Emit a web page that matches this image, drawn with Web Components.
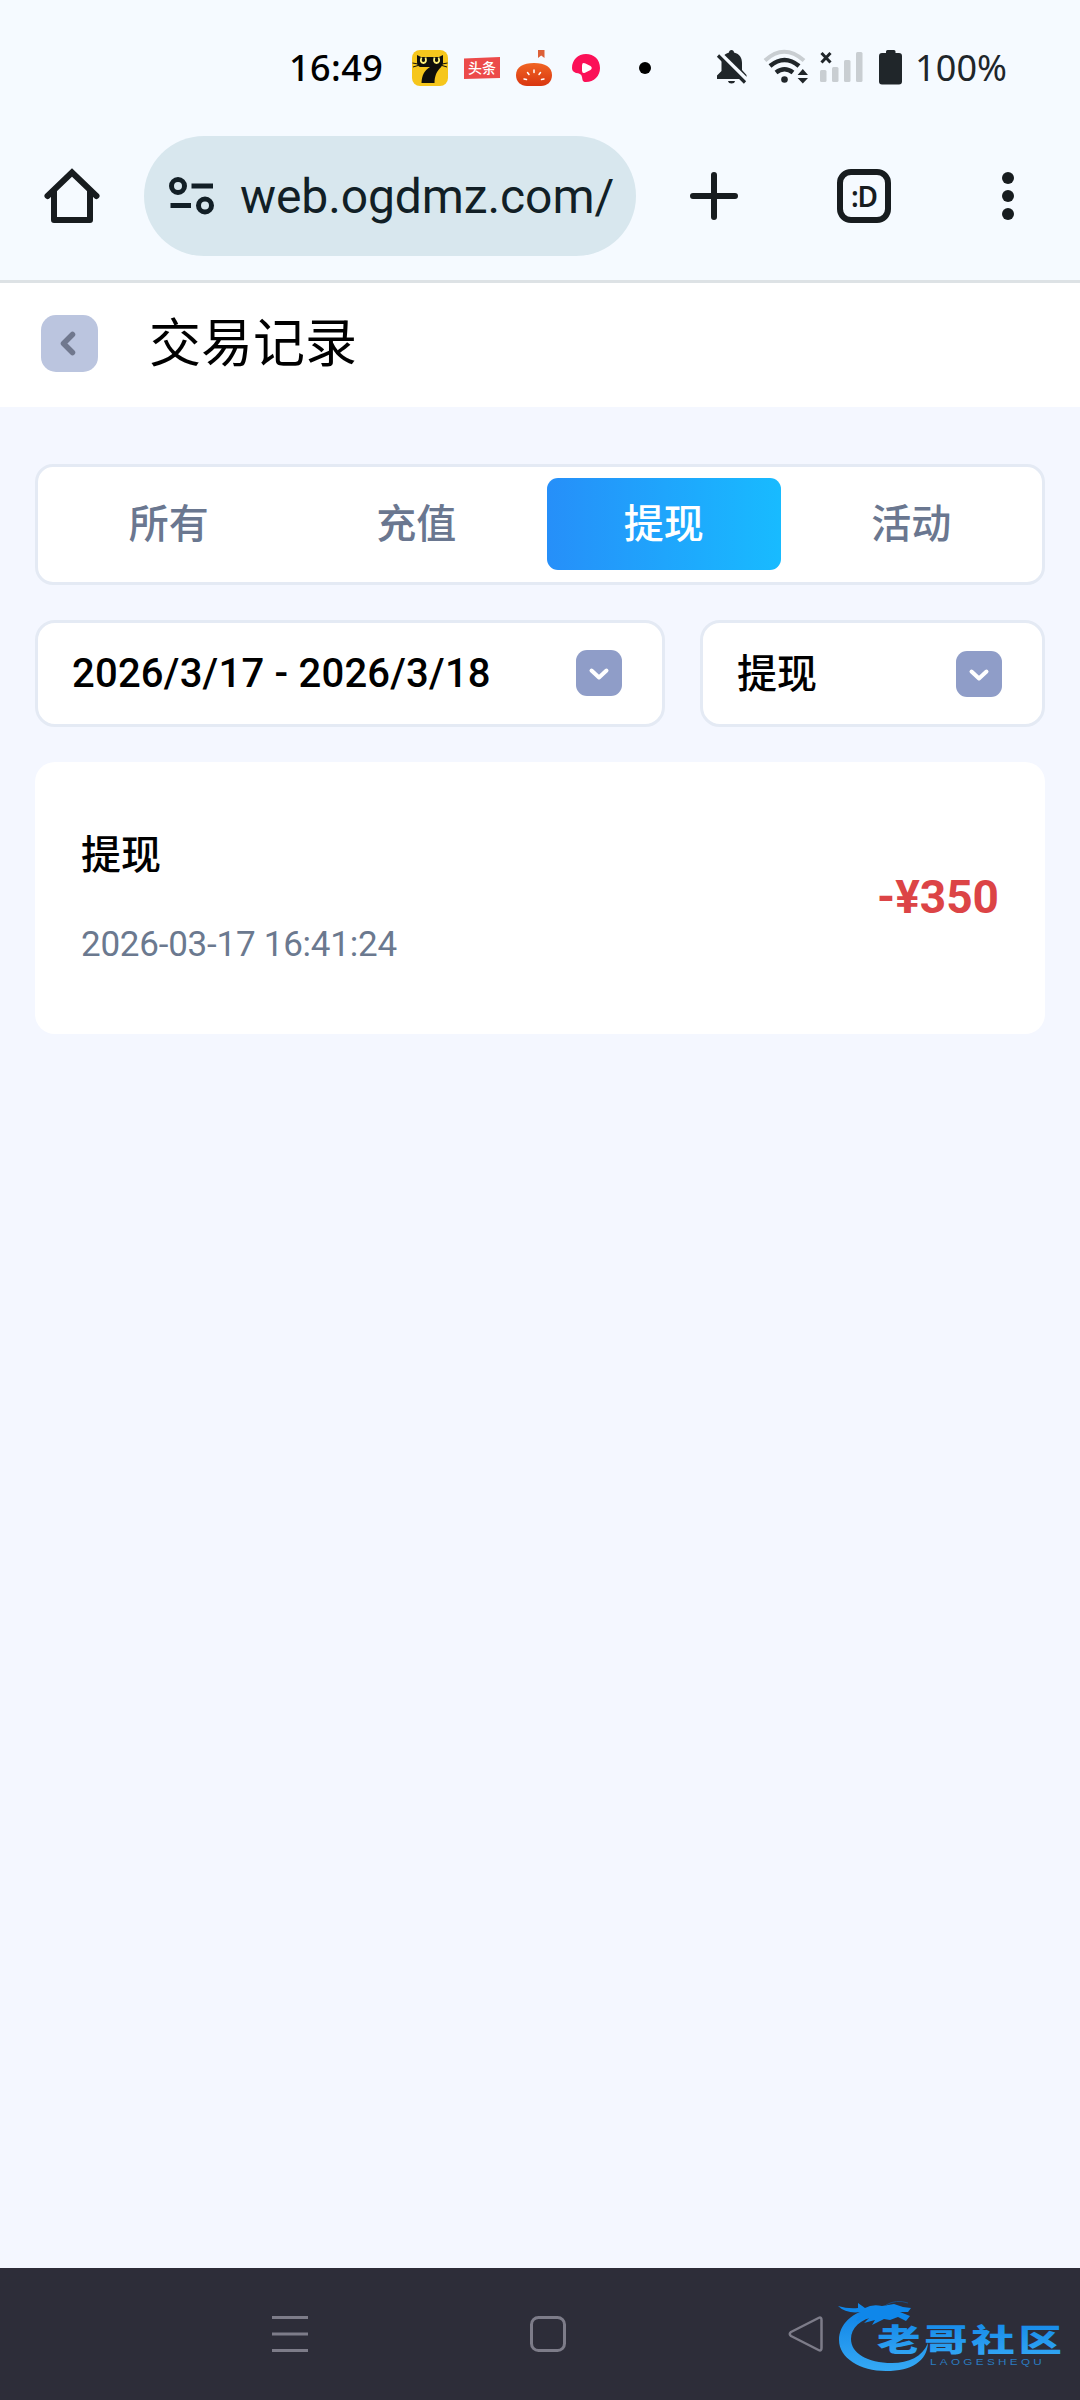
<!DOCTYPE html>
<html lang="zh-CN">
<head>
<meta charset="utf-8">
<title>交易记录</title>
<style>
  html, body {
    margin: 0;
    padding: 0;
  }
  body {
    width: 1080px;
    height: 2400px;
    overflow: hidden;
    background: #f4f7ff;
    font-family: Roboto, "Noto Sans CJK SC", sans-serif;
  }
</style>
</head>
<body>
<app-screen>
  <status-bar slot="top" time="16:49" battery="100%"></status-bar>
  <browser-bar slot="top" tabs=":D">web.ogdmz.com/</browser-bar>
  <page-header slot="top">交易记录</page-header>

  <record-tabs>
    <record-tab>所有</record-tab>
    <record-tab>充值</record-tab>
    <record-tab active>提现</record-tab>
    <record-tab>活动</record-tab>
  </record-tabs>
  <filter-row>
    <filter-select range>2026/3/17 - 2026/3/18</filter-select>
    <filter-select>提现</filter-select>
  </filter-row>
  <record-card>
    <span slot="title">提现</span>
    <span slot="date">2026-03-17 16:41:24</span>
    <span slot="amount">-¥350</span>
  </record-card>

  <nav-bar slot="bottom"></nav-bar>
</app-screen>

<script>
class BaseElement extends HTMLElement {
  constructor() {
    super();
    this.attachShadow({ mode: 'open' });
  }

  connectedCallback() {
    this.shadowRoot.innerHTML = this.render();
  }
}

class AppScreen extends BaseElement {
  render() {
    return `
      <style>
        :host {
          display: flex;
          flex-direction: column;
          width: 1080px;
          height: 2400px;
          background: #f4f7ff;
        }
        main {
          flex: 1;
          display: flex;
          flex-direction: column;
          padding: 57px 35px 0;
        }
      </style>
      <slot name="top"></slot>
      <main><slot></slot></main>
      <slot name="bottom"></slot>
    `;
  }
}

class StatusBar extends BaseElement {
  render() {
    return `
      <style>
        :host {
          display: flex;
          align-items: center;
          box-sizing: border-box;
          height: 120px;
          padding: 16px 0 0 289px;
          background: #f5faff;
          font-family: "Noto Sans", sans-serif;
          font-size: 36px;
          line-height: 52px;
          color: #000;
        }
        svg { display: block; flex: none; overflow: visible; }
        .time, .level { white-space: nowrap; }
        .time { width: 123px; font-weight: 500; letter-spacing: 0.4px; }
        .apps, .sys { display: flex; align-items: center; }
        .apps { gap: 16px; }
        .sys, .level { color: #20262a; }
        .sys { margin-left: 53px; }
        .level { margin-left: 13px; letter-spacing: 0.1px; }
      </style>
      <span class="time">${this.getAttribute('time')}</span>
      <div class="apps">
        <svg width="36" height="36" viewBox="0 0 36 36">
          <rect width="36" height="36" rx="8" fill="#f6c61c"/>
          <path d="M5 5 L9 7 H27 L31 5 V13 C30 19 23 19 22.500 33 H9.500 C10 25 12 21 18 17 H8 Q5 16 5 12 Z" fill="#100f0b"/>
          <path d="M0.500 13 L6 14 M1 17 L6 15.500 M35.500 13 L30 14 M35 17 L30 15.500" stroke="#100f0b" stroke-width="1"/>
          <path d="M9.500 7.500 Q7.500 12.500 11.500 13 Q15 12.500 13.500 7.500 M22.500 7.500 Q21 12.500 24.500 13 Q28.500 12.500 26.500 7.500" fill="none" stroke="#fff27a" stroke-width="1.800"/>
        </svg>
        <svg width="36" height="36" viewBox="0 0 36 36">
          <path d="M0 8.500 L36 7 V28 L0 29 Z" fill="#ec4a4a"/>
          <text x="18" y="23" text-anchor="middle" font-family="Noto Sans CJK SC, sans-serif" font-size="14" font-weight="500" fill="#fff">头条</text>
        </svg>
        <svg width="36" height="36" viewBox="0 0 36 36">
          <defs><linearGradient id="tomato" x1="0" y1="0" x2="0" y2="1"><stop offset="0" stop-color="#f06524"/><stop offset="1" stop-color="#d93610"/></linearGradient></defs>
          <path d="M22 0 H28.500 V8 L25.200 5.500 L22 8 Z" fill="#dc6038"/>
          <path d="M18 13 C29 13 36 17 36 25 C36 32 31 36 25 36 H11 C5 36 0 32 0 25 C0 17 7 13 18 13 Z" fill="url(#tomato)"/>
          <path d="M18 20 V22.500 M11.500 22.500 L13 24.500 M24.500 22.500 L23 24.500 M8 29 L10.500 29.500 M28 29 L25.500 29.500" stroke="#fff" stroke-width="1.500" stroke-linecap="round"/>
        </svg>
        <svg width="36" height="36" viewBox="0 0 36 36">
          <path d="M18 4 C26 4 32 9.500 32 18 C32 26 26 32 18 32 C14.500 32 14.500 30 14 27 C13.500 24 11 23 8 23 C5 22 4 20 4 18 C4 10 10 4 18 4 Z" fill="#fb1057"/>
          <path d="M14 15.500 Q14 12 17.500 13.500 L22.500 16 Q25 18 22.500 20 L17 22.800 Q14 24 14 20.500 Z" fill="#fff"/>
        </svg>
        <svg width="36" height="36" viewBox="0 0 36 36" style="margin-left: 7px"><circle cx="18" cy="18" r="6" fill="#000"/></svg>
      </div>
      <div class="sys">
        <svg width="32" height="36" viewBox="0 0 32 36">
          <path d="M15.500 0 C17 0 18 1 18 2.500 C24 4 26 8 26 13 V20 L30.500 25 V29 H1 V25.500 L5.500 21 V13 C5.500 7 8 4 13 2.500 C13 1 14 0 15.500 0 Z" fill="currentColor"/>
          <path d="M12 31 H19 Q18.500 33.500 15.500 33.500 Q12.500 33.500 12 31 Z" fill="currentColor"/>
          <path d="M4 3.500 L32 31" stroke="#f5faff" stroke-width="4"/>
          <path d="M2 5.500 L29 32.500" stroke="currentColor" stroke-width="3.200"/>
        </svg>
        <svg width="44" height="36" viewBox="0 0 44 36" style="margin-left: 16px" fill="none">
          <path d="M1 10.500 Q20 -7 40 10.500" stroke="#c9ced2" stroke-width="4"/>
          <path d="M6 16 Q20.500 4 35 16" stroke="currentColor" stroke-width="4.500"/>
          <path d="M12 22.500 Q20.500 16 29 22.500" stroke="currentColor" stroke-width="4.500"/>
          <circle cx="20.500" cy="29.500" r="3.300" fill="currentColor"/>
          <path d="M38.800 19 L44 25 H33.600 Z M38.800 33.500 L44 28 H33.600 Z" fill="currentColor"/>
        </svg>
        <svg width="43" height="36" viewBox="0 0 43 36" style="margin-left: 12px">
          <g fill="#c9ced2">
            <rect x="0" y="20" width="6.500" height="12" rx="1.500"/>
            <rect x="12" y="17" width="6.500" height="15" rx="1.500"/>
            <rect x="24" y="10" width="6.500" height="22" rx="1.500"/>
            <rect x="36" y="2" width="6.500" height="30" rx="1.500"/>
          </g>
          <path d="M1.500 3 L10.500 12.500 M10.500 3 L1.500 12.500" stroke="currentColor" stroke-width="3"/>
        </svg>
        <svg width="23" height="36" viewBox="0 0 23 36" style="margin-left: 16px">
          <path d="M7 3 V1.500 Q7 0 8.500 0 H15 Q16.500 0 16.500 1.500 V3 H20 Q23 3 23 6 V31.500 Q23 34.500 20 34.500 H3 Q0 34.500 0 31.500 V6 Q0 3 3 3 Z" fill="currentColor"/>
        </svg>
      </div>
      <span class="level">${this.getAttribute('battery')}</span>
    `;
  }
}

class BrowserBar extends BaseElement {
  render() {
    return `
      <style>
        :host {
          display: flex;
          align-items: center;
          box-sizing: border-box;
          height: 163px;
          padding: 0 66px 8px 45px;
          border-bottom: 3px solid #dde2e5;
          background: #f5faff;
          color: #171c1f;
        }
        svg { display: block; flex: none; overflow: visible; }
        .pill {
          display: flex;
          align-items: center;
          box-sizing: border-box;
          flex: none;
          width: 492px;
          height: 120px;
          margin: 0 54px 0 45px;
          padding: 0 24px 0 25px;
          border-radius: 60px;
          background: #d8e7ee;
          color: #121f26;
        }
        .url {
          margin-left: 25px;
          padding-top: 2px;
          font-size: 48px;
          line-height: 60px;
          white-space: nowrap;
          letter-spacing: -0.1px;
        }
        .tabs {
          display: flex;
          align-items: center;
          justify-content: center;
          flex: none;
          box-sizing: border-box;
          width: 54px;
          height: 54px;
          margin: 0 111px 0 99px;
          border: 6px solid currentColor;
          border-radius: 14px;
          font: 600 28px/40px "Noto Sans", sans-serif;
          letter-spacing: -1px;
        }
      </style>
      <svg width="54" height="54" viewBox="0 0 54 54" fill="none" stroke="currentColor" stroke-width="6" stroke-linejoin="round">
        <path d="M2.500 27 L27 3.500 L51.500 27" stroke-linecap="round" stroke-linejoin="miter"/>
        <path d="M9 22 V51 H45 V22"/>
      </svg>
      <div class="pill">
        <svg width="46" height="38" viewBox="0 0 46 38" fill="none" stroke="currentColor" stroke-width="5">
          <circle cx="9" cy="9" r="6.500"/>
          <path d="M22.500 9 H44 M1.500 28.500 H22"/>
          <circle cx="36" cy="28.500" r="6.500"/>
        </svg>
        <span class="url"><slot></slot></span>
      </div>
      <svg width="48" height="48" viewBox="0 0 48 48" stroke="currentColor" stroke-width="6" stroke-linecap="round">
        <path d="M24 3 V45 M3 24 H45"/>
      </svg>
      <div class="tabs">${this.getAttribute('tabs')}</div>
      <svg width="12" height="48" viewBox="0 0 12 48" fill="currentColor">
        <circle cx="6" cy="6" r="6"/><circle cx="6" cy="24" r="6"/><circle cx="6" cy="42" r="6"/>
      </svg>
    `;
  }
}

class PageHeader extends BaseElement {
  render() {
    return `
      <style>
        :host {
          display: flex;
          align-items: center;
          box-sizing: border-box;
          height: 124px;
          padding: 0 41px 3px;
          background: #fff;
          color: #000;
        }
        .back {
          display: flex;
          width: 57px;
          height: 57px;
          border-radius: 15px;
          background: #bbc5df;
        }
        h1 {
          margin: 0 0 0 51px;
          padding-top: 3px;
          font-size: 52px;
          font-weight: 400;
          line-height: 76px;
        }
      </style>
      <div class="back">
        <svg width="57" height="57" viewBox="0 0 57 57" fill="none" stroke="#70788e" stroke-width="5.500" stroke-linecap="round" stroke-linejoin="round">
          <path d="M31.500 19.500 L22.500 28.500 L31.500 37.500"/>
        </svg>
      </div>
      <h1><slot></slot></h1>
    `;
  }
}

class RecordTabs extends BaseElement {
  render() {
    return `
      <style>
        :host {
          display: grid;
          grid-template-columns: repeat(4, 1fr);
          gap: 14px;
          box-sizing: border-box;
          height: 121px;
          padding: 11px 14px 12px;
          border: 3px solid #e4eaf4;
          border-radius: 18px;
          background: #fff;
        }
      </style>
      <slot></slot>
    `;
  }
}

class RecordTab extends BaseElement {
  render() {
    return `
      <style>
        :host {
          display: flex;
          align-items: center;
          justify-content: center;
          padding-top: 2px;
          border-radius: 11px;
          color: #6a7790;
          font-size: 40px;
          font-weight: 500;
          line-height: 60px;
        }
        :host([active]) {
          background: linear-gradient(90deg, #268ff9, #18bbff);
          color: #fff;
        }
      </style>
      <slot></slot>
    `;
  }
}

class FilterRow extends BaseElement {
  render() {
    return `
      <style>
        :host {
          display: grid;
          grid-template-columns: 630px 1fr;
          gap: 35px;
          margin: 35px 0;
        }
      </style>
      <slot></slot>
    `;
  }
}

class FilterSelect extends BaseElement {
  render() {
    return `
      <style>
        :host {
          display: flex;
          align-items: center;
          justify-content: space-between;
          box-sizing: border-box;
          height: 107px;
          padding: 1px 40px 0 34px;
          border: 3px solid #e4eaf4;
          border-radius: 20px;
          background: #fff;
          color: #000;
          font-size: 40px;
          font-weight: 500;
          line-height: 60px;
          white-space: nowrap;
        }
        :host([range]) {
          padding: 0 40px 1px 34px;
          letter-spacing: 0.22px;
        }
        span { padding-top: 2px; }
        svg { display: block; }
      </style>
      <span><slot></slot></span>
      <svg width="46" height="46" viewBox="0 0 46 46">
        <rect width="46" height="46" rx="11" fill="#8f9dc8"/>
        <path d="M15.500 20.500 L23 27.500 L30.500 20.500" fill="none" stroke="#fff" stroke-width="4" stroke-linecap="round" stroke-linejoin="round"/>
      </svg>
    `;
  }
}

class RecordCard extends BaseElement {
  render() {
    return `
      <style>
        :host {
          display: flex;
          align-items: center;
          justify-content: space-between;
          box-sizing: border-box;
          height: 272px;
          padding: 0 46px 2px;
          border-radius: 20px;
          background: #fff;
        }
        .info { display: flex; flex-direction: column; gap: 36px; }
        .title { color: #000; font-size: 40px; font-weight: 500; line-height: 60px; }
        .date { color: #6b798f; font-size: 35px; line-height: 46px; letter-spacing: -0.24px; }
        .amount { color: #dc4446; font-size: 46px; font-weight: 700; line-height: 60px; }
      </style>
      <div class="info">
        <div class="title"><slot name="title"></slot></div>
        <div class="date"><slot name="date"></slot></div>
      </div>
      <div class="amount"><slot name="amount"></slot></div>
    `;
  }
}

class NavBar extends BaseElement {
  render() {
    return `
      <style>
        :host {
          display: flex;
          align-items: center;
          box-sizing: border-box;
          height: 132px;
          padding-left: 272px;
          background: #2d2d39;
          color: #7d7c89;
        }
        svg { display: block; flex: none; overflow: visible; }
      </style>
      <svg width="36" height="36" viewBox="0 0 36 36" stroke="currentColor" stroke-width="3">
        <path d="M0 1.500 H36 M0 18 H36 M0 34.500 H36"/>
      </svg>
      <svg width="36" height="36" viewBox="0 0 36 36" fill="none" stroke="currentColor" stroke-width="3" style="margin-left: 222px">
        <rect x="1.500" y="1.500" width="33" height="33" rx="7"/>
      </svg>
      <svg width="36" height="36" viewBox="0 0 36 36" fill="none" stroke="currentColor" stroke-width="2.500" stroke-linejoin="round" style="margin-left: 222px">
        <path d="M30.500 2 Q33.500 0.500 33.500 4 V32 Q33.500 35.500 30.500 34 L3 20 Q0.500 18 3 16 Z"/>
      </svg>
      <svg width="230" height="80" viewBox="0 0 230 80" style="margin-left: 12px">
        <defs>
          <linearGradient id="wm" x1="0" y1="0" x2="0" y2="1"><stop offset="0" stop-color="#0f83e6"/><stop offset="1" stop-color="#35a9f5"/></linearGradient>
        </defs>
        <path d="M38 14 C16 17 3 31 3 46 C3 64 24 77 50 77 C76 77 91 67 92 49 C86 63 73 69 56 69 C31 69 15 59 15 45 C15 34 24 25 41 22 Z" fill="url(#wm)"/>
        <path d="M2 12 Q12 15 22 14 L22 9 L29 14 Q36 10 46 12 L58 10 L67 13 L75 14 L72 18 L64 18 L74 22 L70 27 L62 23 L54 26 L48 25 L36 31 L39 26 L28 29 L33 24 L20 27 L25 18 Q10 20 2 12 Z" fill="#0f87ea"/>
        <path d="M50 11 Q60 5 72 9" fill="none" stroke="#1b4d80" stroke-width="1"/>
        <text transform="translate(41 56.500) scale(1.400 1)" x="0 33.700 67.400 101" y="0" font-family="Noto Sans CJK SC, sans-serif" font-size="31" font-weight="900" fill="url(#wm)">老哥社区</text>
        <text transform="translate(94 71) scale(1.300 1)" x="0" y="0" textLength="86" font-family="Liberation Sans, sans-serif" font-size="9" fill="#2b7cc0">LAOGESHEQU</text>
      </svg>
    `;
  }
}

customElements.define('app-screen', AppScreen);
customElements.define('status-bar', StatusBar);
customElements.define('browser-bar', BrowserBar);
customElements.define('page-header', PageHeader);
customElements.define('record-tabs', RecordTabs);
customElements.define('record-tab', RecordTab);
customElements.define('filter-row', FilterRow);
customElements.define('filter-select', FilterSelect);
customElements.define('record-card', RecordCard);
customElements.define('nav-bar', NavBar);
</script>
</body>
</html>
